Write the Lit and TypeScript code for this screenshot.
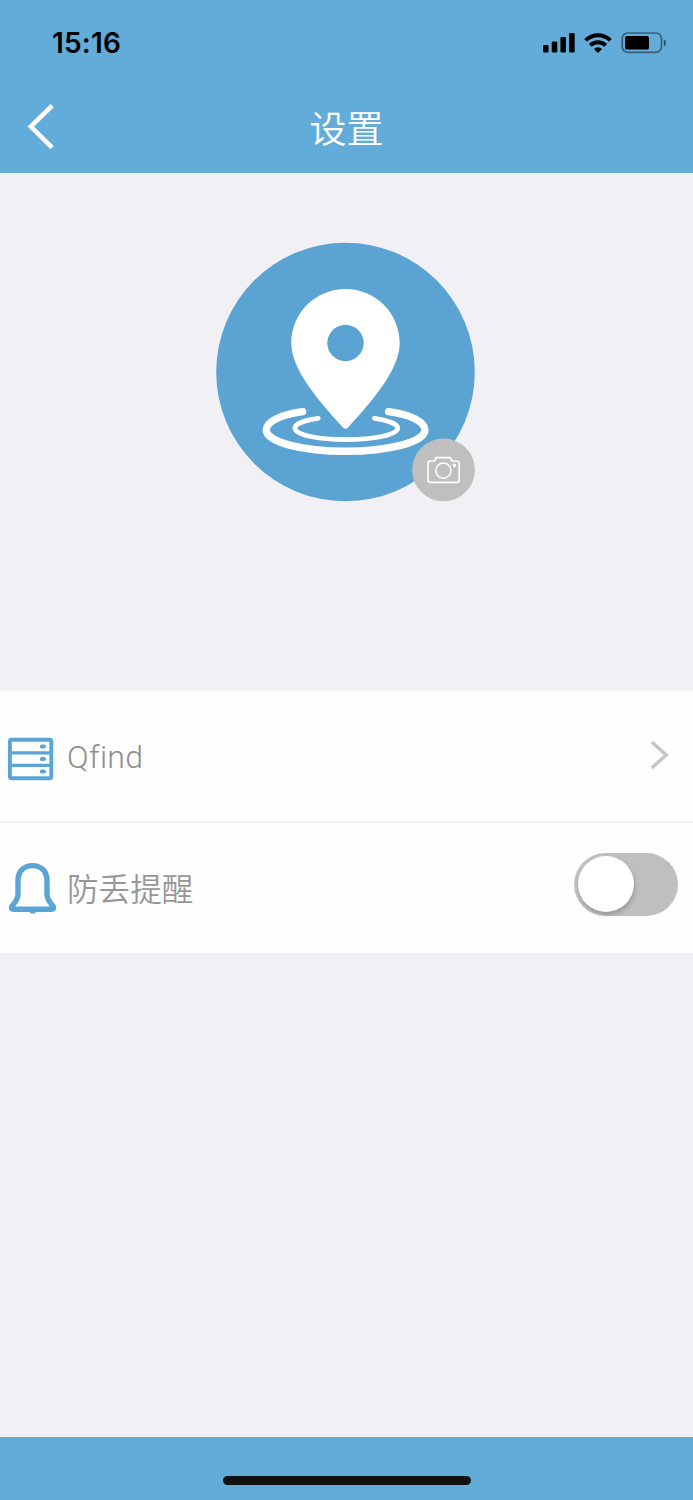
import { LitElement, html, css } from "lit";
import { customElement, property } from "lit/decorators.js";

@customElement("status-bar")
class StatusBar extends LitElement {
  static styles = css`
    :host { display: flex; justify-content: space-between; height: 84px; padding: 0 26px 0 52px; box-sizing: border-box; }
    .time { font: 600 28px/32px Inter, sans-serif; margin-top: 27px; color: #000; letter-spacing: 0.2px; }
    .icons { margin-top: 30px; display: block; }
  `;
  render() {
    return html`
      <div class="time">15:16</div>
      <svg class="icons" width="125" height="26" viewBox="542 30 125 26">
        <rect x="543" y="45" width="5.6" height="7.6" rx="1.4" />
        <rect x="551.7" y="41.5" width="5.6" height="11.1" rx="1.4" />
        <rect x="560.4" y="37" width="5.6" height="15.6" rx="1.4" />
        <rect x="569.1" y="33" width="5.6" height="19.6" rx="1.4" />
        <g fill="none" stroke="#000" stroke-width="3.9">
          <path d="M585.6 40.3 A17.6 17.6 0 0 1 610.4 40.3" />
          <path d="M590.3 45.4 A11 11 0 0 1 605.7 45.4" />
        </g>
        <path d="M594 49 a5.7 5.7 0 0 1 8 0 L598 53 Z" />
        <rect x="622.2" y="33" width="39.3" height="19.3" rx="5.6" fill="none" stroke="#000" stroke-opacity=".45" stroke-width="1.7" />
        <rect x="625" y="36" width="24" height="13.6" rx="2.2" />
        <path d="M663.8 39.2 c3 1.4 3 5.8 0 7.2 Z" fill-opacity=".5" />
      </svg>
    `;
  }
}

@customElement("nav-bar")
class NavBar extends LitElement {
  @property() heading = "";
  static styles = css`
    :host { display: grid; grid-template-columns: 80px 1fr 80px; height: 89px; }
    .back { margin: 16px 0 0 24px; display: block; }
    .title { margin-top: 17px; text-align: center; color: #fff; font: 350 37px/52px "Noto Sans CJK SC", sans-serif; }
  `;
  render() {
    return html`
      <svg class="back" width="34" height="54" viewBox="24 100 34 54">
        <path d="M52.2 105.6 L30.8 126.6 L52.2 147.6" fill="none" stroke="#fff" stroke-width="4.6" />
      </svg>
      <div class="title">${this.heading}</div>
    `;
  }
}

@customElement("profile-avatar")
class ProfileAvatar extends LitElement {
  static styles = css`
    :host { display: block; position: relative; width: 259px; height: 260px; }
    .badge { position: absolute; right: 0; bottom: 0; width: 63px; height: 64px; }
    svg { display: block; }
  `;
  render() {
    return html`
      <svg width="259" height="260" viewBox="216 242 259 260">
        <circle cx="345.5" cy="372" r="129.3" fill="#5ba3d3" />
        <path fill="#fff" fill-rule="evenodd" d="M345.5 289 C375.5 289 399.7 313 399.7 343 C399.7 368 376 397 348 427.5 Q345.5 430 343 427.5 C315 397 291.3 368 291.3 343 C291.3 313 315.5 289 345.5 289 Z M345.5 324.8 a18.2 18.2 0 1 0 0.01 0 Z" />
        <g fill="none" stroke="#fff" stroke-linecap="round">
          <path stroke-width="7.4" d="M302.6 411.7 C281 414.5 266.3 421.5 266.3 430 C266.3 442 302 451.3 345.5 451.3 C389 451.3 424.9 442 424.9 430 C424.9 421.5 410 414.5 388.6 411.7" />
          <path stroke-width="4.8" d="M318.2 418.4 C304 420.4 294.9 424 294.9 428 C294.9 434.6 317 439.6 346 439.6 C375 439.6 397.7 434.6 397.7 428 C397.7 424 388 420.4 374.4 418.4" />
        </g>
      </svg>
      <div class="badge">
        <svg width="63" height="64" viewBox="412 438 63 64" fill="none" stroke="#fff" stroke-width="1.6" stroke-linejoin="round">
          <circle cx="443.5" cy="469.9" r="31.4" fill="#bfbfbf" stroke="none" />
          <path d="M430.4 461 H434.6 L436 457.6 H450.5 L452 461 H456.7 Q459.2 461 459.2 463.5 V480 Q459.2 482.4 456.7 482.4 H430.4 Q428 482.4 428 480 V463.5 Q428 461 430.4 461 Z" />
          <circle cx="443.4" cy="470.6" r="7.6" />
          <circle cx="454.5" cy="465.4" r="1.8" fill="#fff" stroke="none" />
        </svg>
      </div>
    `;
  }
}

@customElement("toggle-switch")
class ToggleSwitch extends LitElement {
  static styles = css`
    :host { display: block; width: 104px; height: 63px; border-radius: 32px; background: #bfbfbf; box-sizing: border-box; padding: 3px 4px; }
    .knob { width: 56px; height: 56px; border-radius: 50%; background: #fff; box-shadow: 1px 3px 4px rgba(0, 0, 0, 0.2); }
  `;
  render() {
    return html`<div class="knob"></div>`;
  }
}

@customElement("app-root")
class AppRoot extends LitElement {
  static styles = css`
    :host { display: flex; flex-direction: column; height: 1500px; background: #f0f0f5; }
    .header { height: 173px; background: #63acd9; }
    .hero { height: 518px; box-sizing: border-box; padding: 69px 0 0 216px; }
    .row { display: flex; height: 130px; background: #fefefe; }
    .list { display: flex; flex-direction: column; gap: 2px; }
    .icon { width: 67px; height: 130px; flex: none; display: block; }
    .label { flex: 1; color: #979797; font: 350 31.6px/48px "Noto Sans CJK SC", sans-serif; margin-top: 40px; }
    .label.latin { font: 350 32px/48px Roboto, sans-serif; color: #8e8e8e; margin-top: 42px; letter-spacing: 0.3px; }
    .chevron { display: block; margin: 44px 20px 0 0; }
    .switch { margin: 30px 15px 0 0; }
    .footer { margin-top: auto; height: 63px; background: #63acd9; display: flex; justify-content: center; }
    .home { width: 248px; height: 9px; border-radius: 5px; background: #111; margin-top: 38.5px; }
  `;
  render() {
    return html`
      <div class="header">
        <status-bar></status-bar>
        <nav-bar heading="设置"></nav-bar>
      </div>
      <div class="hero"><profile-avatar></profile-avatar></div>
      <div class="list">
        <div class="row">
          <svg class="icon" viewBox="0 691 67 130" fill="none" stroke="#5aa5d6">
            <rect x="9.9" y="739.8" width="41.4" height="38.4" rx="1.8" stroke-width="3.9" />
            <path d="M10 752.8 H51 M10 765.4 H51" stroke-width="3.3" />
            <path d="M41.8 746.6 H44 M41.8 759.1 H44 M41.8 771.5 H44" stroke-width="4" stroke-linecap="round" />
          </svg>
          <div class="label latin">Qfind</div>
          <svg class="chevron" width="26" height="40" viewBox="647 735 26 40">
            <path d="M651.8 742 L666.2 755 L651.8 768" fill="none" stroke="#c6c6ca" stroke-width="3.5" />
          </svg>
        </div>
        <div class="row">
          <svg class="icon" viewBox="0 823 67 130" fill="none" stroke="#5aa5d6">
            <path stroke-width="5.4" stroke-linejoin="round" d="M18 894 V880.5 C18 871 24 865.6 32.5 865.6 C41 865.6 47 871 47 880.5 V894 C47 900 50.5 903 53.2 906.4 Q54.3 909.3 51.5 909.3 H13.5 Q10.7 909.3 11.8 906.4 C14.5 903 18 900 18 894 Z" />
            <path d="M31.5 912.2 H34" stroke-width="2.8" stroke-linecap="round" />
          </svg>
          <div class="label">防丢提醒</div>
          <toggle-switch class="switch"></toggle-switch>
        </div>
      </div>
      <div class="footer"><div class="home"></div></div>
    `;
  }
}
